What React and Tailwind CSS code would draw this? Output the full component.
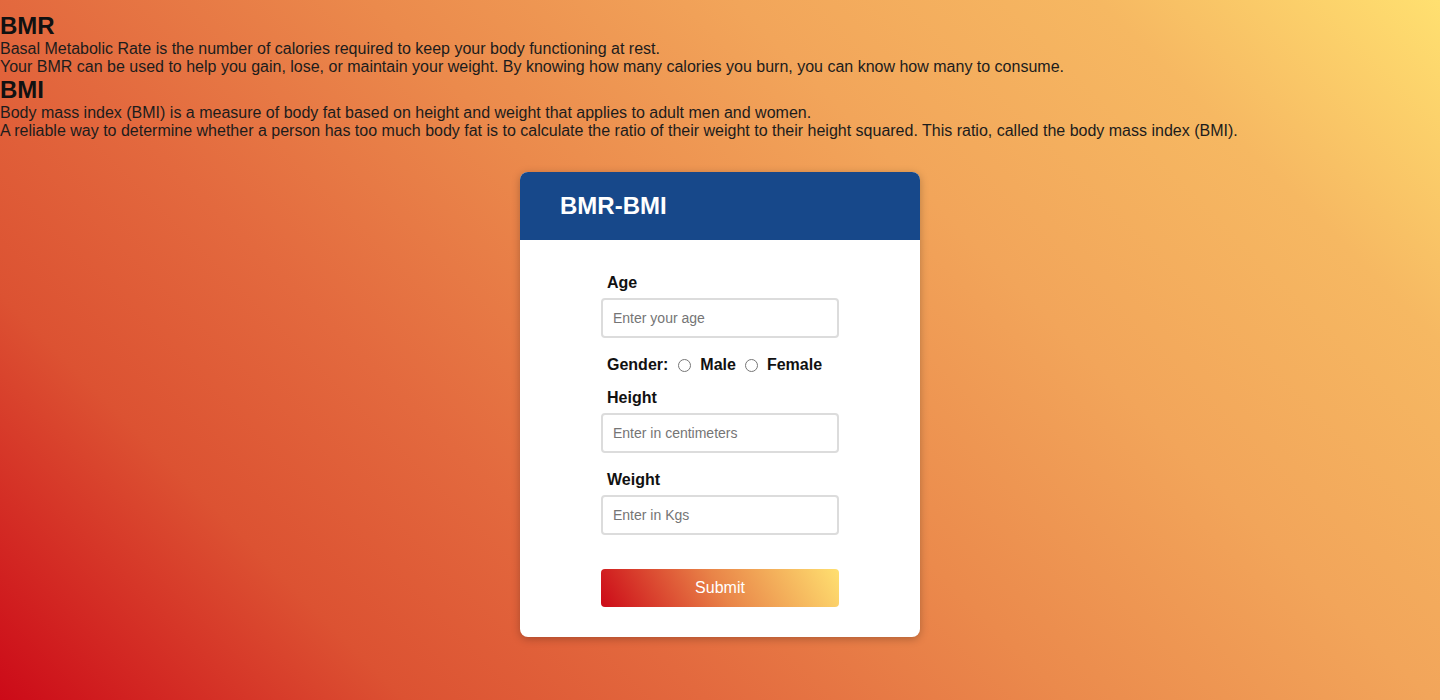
import React from 'react';

const Field = ({ label, placeholder, className }) => (
  <div className={className}>
    <label className="block pl-[6px] text-[16px] leading-[18px] font-bold text-[#111]">{label}</label>
    <input
      type="text"
      placeholder={placeholder}
      className="mt-[6px] block w-[238px] h-[40px] rounded-[4px] border-2 border-[#dcdcdc] bg-white px-[10px] text-[14px] text-[#222] placeholder:text-[#757575] outline-none"
    />
  </div>
);

const App = () => {
  return (
    <div
      className="min-h-[700px] w-full bg-[linear-gradient(45deg,#cc0a18_0%,#dc5232_19%,#e3693e_33%,#eb8a4c_50%,#f2a55a_67%,#f6b862_84%,#ffe070_100%)] pt-[12px] text-[#1c1c1c]"
      style={{ fontFamily: '"Liberation Sans", Arial, sans-serif' }}
    >
      <h2 className="text-[24px] leading-[28px] font-bold text-[#111]">BMR</h2>
      <p className="text-[16px] leading-[18px]">
        Basal Metabolic Rate is the number of calories required to keep your body functioning at rest.
        <br />
        Your BMR can be used to help you gain, lose, or maintain your weight. By knowing how many calories you burn, you can know how many to consume.
      </p>
      <h2 className="text-[24px] leading-[28px] font-bold text-[#111]">BMI</h2>
      <p className="text-[16px] leading-[18px]">
        Body mass index (BMI) is a measure of body fat based on height and weight that applies to adult men and women.
        <br />
        A reliable way to determine whether a person has too much body fat is to calculate the ratio of their weight to their height squared. This ratio, called the body mass index (BMI).
      </p>

      <div className="mx-auto mt-[32px] w-[400px] overflow-hidden rounded-[8px] bg-white shadow-[0_2px_8px_rgba(0,0,0,0.25)]">
        <div className="flex h-[68px] items-center bg-[#17488a] pl-[40px]">
          <h1 className="text-[24px] font-bold text-white">BMR-BMI</h1>
        </div>
        <form className="pl-[81px] pt-[34px] pb-[30px]" onSubmit={(e) => e.preventDefault()}>
          <Field label="Age" placeholder="Enter your age" />
          <div className="mt-[18px] flex items-center pl-[6px] text-[16px] leading-[18px] font-bold text-[#111]">
            <span>Gender:</span>
            <input type="radio" name="gender" className="ml-[10px] mr-[9px] h-[13px] w-[13px]" />
            <span>Male</span>
            <input type="radio" name="gender" className="ml-[9px] mr-[9px] h-[13px] w-[13px]" />
            <span>Female</span>
          </div>
          <Field label="Height" placeholder="Enter in centimeters" className="mt-[15px]" />
          <Field label="Weight" placeholder="Enter in Kgs" className="mt-[18px]" />
          <button
            type="submit"
            className="mt-[34px] block h-[38px] w-[238px] rounded-[4px] bg-[linear-gradient(60deg,#cc0a18_0%,#e98448_50%,#ffe070_100%)] text-[16px] text-white"
          >
            Submit
          </button>
        </form>
      </div>
    </div>
  );
};

export default App;
